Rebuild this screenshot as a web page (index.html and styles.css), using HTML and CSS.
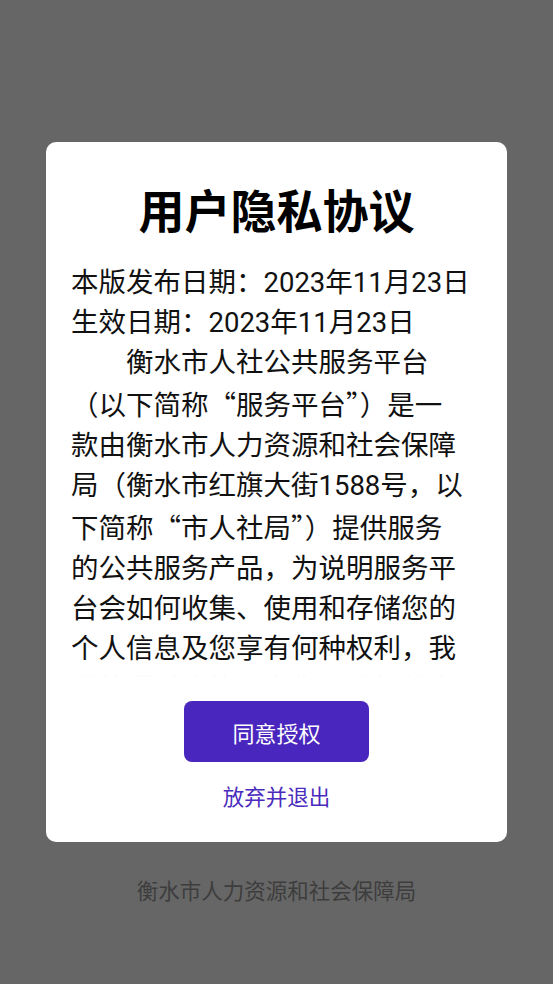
FILE: index.html
```html
<!DOCTYPE html>
<html lang="zh-CN">
<head>
  <meta charset="UTF-8">
  <meta name="viewport" content="width=device-width, initial-scale=1.0">
  <title>用户隐私协议</title>
  <link rel="stylesheet" href="styles.css">
</head>
<body>
  <main class="dialog">
    <h1 class="title">用户隐私协议</h1>
    <div class="content">
      <p class="meta">本版发布日期：2023年11月23日<br>生效日期：2023年11月23日</p>
      <p class="body">衡水市人社公共服务平台<br>（以下简称<span class="q">“</span>服务平台<span class="q">”</span>）是一<br>款由衡水市人力资源和社会保障<br>局（衡水市红旗大街1588号，以<br>下简称<span class="q">“</span>市人社局<span class="q">”</span>）提供服务<br>的公共服务产品，为说明服务平<br>台会如何收集、使用和存储您的<br>个人信息及您享有何种权利，我<br>们将通过本协议向您阐述相关事<br>宜，其中要点如下：</p>
    </div>
    <button class="agree">同意授权</button>
    <a class="quit" href="#">放弃并退出</a>
  </main>
  <footer class="org">衡水市人力资源和社会保障局</footer>
</body>
</html>
```

FILE: styles.css
```css
* {
  box-sizing: border-box;
}

body {
  margin: 0;
  height: 984px;
  background: #666666;
  font-family: Roboto, "Noto Sans CJK SC", sans-serif;
  display: flex;
  flex-direction: column;
  align-items: center;
}

.dialog {
  width: 461px;
  height: 700px;
  margin-top: 142px;
  padding: 36px 25px 29px;
  background: #fff;
  border-radius: 10px;
  display: flex;
  flex-direction: column;
  align-items: center;
}

.title {
  margin: 0;
  font-family: "Noto Sans CJK SC", sans-serif;
  font-size: 46px;
  line-height: 60px;
  font-weight: 700;
  color: #000;
}

.content {
  position: relative;
  width: 100%;
  height: 414px;
  margin-top: 25px;
  margin-bottom: 4px;
  overflow: hidden;
  font-size: 27.5px;
  line-height: 40px;
  color: #111;
  white-space: nowrap;
}

.content::after {
  content: "";
  position: absolute;
  left: 0;
  right: 0;
  bottom: 0;
  height: 14px;
  background: linear-gradient(rgba(255, 255, 255, 0.75), #fff);
}

.content p {
  margin: 0;
}

.body {
  text-indent: 2em;
}

.q {
  font-family: "Noto Sans CJK SC", sans-serif;
}

.agree {
  width: 185px;
  height: 61px;
  margin-top: 20px;
  border: none;
  border-radius: 8px;
  background: #4926bd;
  color: #fff;
  font-family: Roboto, "Noto Sans CJK SC", sans-serif;
  font-size: 22px;
}

.quit {
  margin-top: 21px;
  font-size: 21.5px;
  line-height: 30px;
  color: #4a2bbd;
  text-decoration: none;
}

.org {
  margin-top: 35px;
  font-size: 21.5px;
  line-height: 30px;
  color: #3d3d3d;
}
```
